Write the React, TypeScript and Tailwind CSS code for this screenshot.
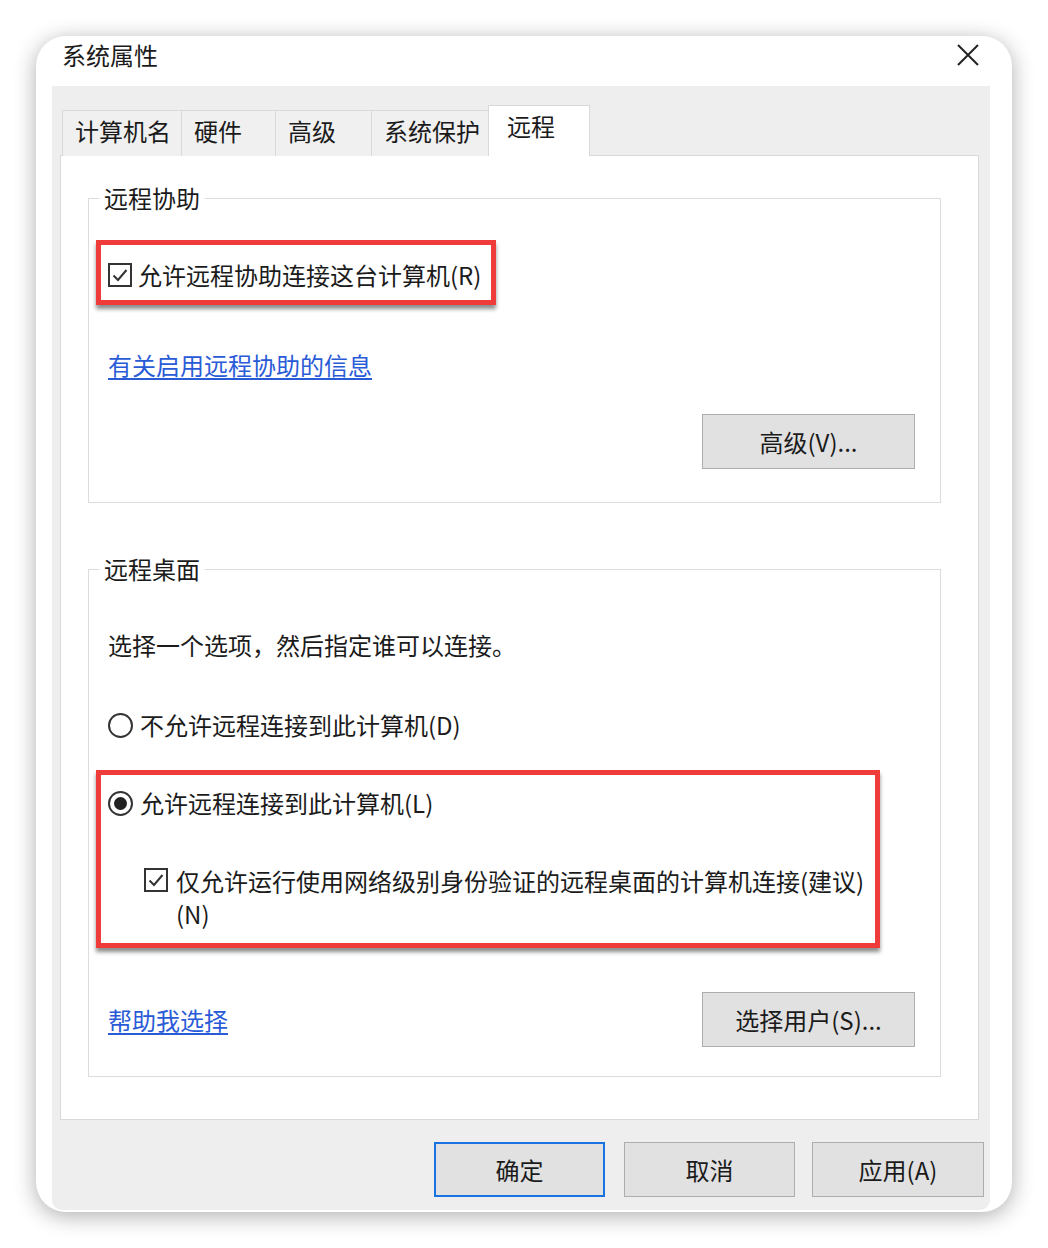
const font = "font-['Noto_Sans_CJK_SC','Noto_Sans',sans-serif]";

const Checkbox = () => (
  <span className="flex h-[24px] w-[24px] shrink-0 items-center justify-center border-2 border-[#333333] bg-white">
    <svg width="18" height="18" viewBox="0 0 18 18" fill="none">
      <path d="M2.5 9.5 L7 14 L15.5 4" stroke="#333333" strokeWidth="2" />
    </svg>
  </span>
);

const Radio = ({ checked }: { checked?: boolean }) => (
  <span className="flex h-[25px] w-[25px] shrink-0 items-center justify-center rounded-full border-2 border-[#333333] bg-white">
    {checked && <span className="h-[13px] w-[13px] rounded-full bg-[#222222]" />}
  </span>
);

const Button = ({ children, primary, className = '' }: { children: React.ReactNode; primary?: boolean; className?: string }) => (
  <button
    className={`flex h-[55px] items-center justify-center bg-[#e1e1e1] text-[24px] text-[#1b1b1b] ${
      primary ? 'border-2 border-[#1a73e0]' : 'border border-[#adadad]'
    } ${className}`}
  >
    {children}
  </button>
);

const tabs = [
  { label: '计算机名', w: 'w-[120px]' },
  { label: '硬件', w: 'w-[95px]' },
  { label: '高级', w: 'w-[97px]' },
  { label: '系统保护', w: 'w-[118px]' },
];

export default function App() {
  return (
    <div className={`h-[1248px] w-[1048px] bg-white pl-[36px] pt-[36px] ${font} text-[#1b1b1b]`}>
      <div className="flex h-[1176px] w-[976px] flex-col overflow-hidden rounded-[30px] bg-white shadow-[0_4px_22px_rgba(0,0,0,0.32)]">
        {/* title bar */}
        <div className="flex h-[50px] shrink-0 items-start justify-between pl-[26px] pr-[33px]">
          <span className="text-[24px] leading-[38px]">系统属性</span>
          <svg width="22" height="22" viewBox="0 0 22 22" className="mt-[8px]">
            <path d="M1 1 L21 21 M21 1 L1 21" stroke="#222222" strokeWidth="2" />
          </svg>
        </div>

        <div className="ml-[16px] mr-[22px] mb-[2px] flex flex-1 flex-col rounded-b-[10px] bg-[#eeeeee] pl-[8px] pr-[11px] pt-[19px]">
          {/* tabs */}
          <div className="relative z-10 -mb-px flex h-[51px] items-end pl-[2px]">
            {tabs.map((t) => (
              <div
                key={t.label}
                className={`flex h-[46px] items-center border border-b-0 border-[#d9d9d9] bg-[#f0f0f0] pb-[5px] pl-[12px] text-[24px] leading-none -ml-px first:ml-0 ${t.w}`}
              >
                {t.label}
              </div>
            ))}
            <div className="-ml-px flex h-[51px] w-[102px] items-start border border-b-0 border-[#d9d9d9] bg-white pl-[18px] pt-[8px] text-[24px] leading-none">
              远程
            </div>
          </div>

          {/* tab panel */}
          <div className="flex flex-col border border-[#d9d9d9] bg-white pb-[42px] pl-[27px] pr-[37px] pt-[26px]">
            <fieldset className="border border-[#dcdcdc] px-[7px] pb-[33px]">
              <legend className="ml-[3px] px-[5px] text-[24px] leading-[32px]">远程协助</legend>
              <div className="mt-[26px] w-fit border-[5px] border-[#f03b3b] shadow-[0_4px_4px_rgba(0,0,0,0.45)]">
                <label className="flex h-[55px] items-center gap-[6px] pl-[7px] pr-[10px] pt-[4px] text-[24px] leading-[32px]">
                  <Checkbox />
                  允许远程协助连接这台计算机(R)
                </label>
              </div>
              <a className="ml-[12px] mt-[44px] block w-fit text-[24px] leading-[32px] text-[#2a5bd7] underline underline-offset-[3px]">
                有关启用远程协助的信息
              </a>
              <div className="mt-[33px] flex justify-end pr-[18px]">
                <Button className="h-[54px] w-[213px]">高级(V)...</Button>
              </div>
            </fieldset>

            <fieldset className="mt-[50px] border border-[#dcdcdc] px-[7px] pb-[29px]">
              <legend className="ml-[3px] px-[5px] text-[24px] leading-[32px]">远程桌面</legend>
              <p className="ml-[12px] mt-[44px] text-[24px] leading-[32px]">选择一个选项，然后指定谁可以连接。</p>
              <label className="ml-[12px] mt-[48px] flex items-center gap-[7px] text-[24px] leading-[32px]">
                <Radio />
                不允许远程连接到此计算机(D)
              </label>
              <div className="mt-[29px] w-[784px] border-[5px] border-[#f03b3b] pb-[13px] pl-[7px] pt-[12px] shadow-[0_4px_4px_rgba(0,0,0,0.45)]">
                <label className="flex items-center gap-[7px] text-[24px] leading-[32px]">
                  <Radio checked />
                  允许远程连接到此计算机(L)
                </label>
                <label className="ml-[36px] mt-[45px] flex items-start gap-[8px] text-[24px] leading-[33px]">
                  <span className="mt-[4px]">
                    <Checkbox />
                  </span>
                  <span className="flex flex-col">
                    <span>仅允许运行使用网络级别身份验证的远程桌面的计算机连接(建议)</span>
                    <span>(N)</span>
                  </span>
                </label>
              </div>
              <div className="mt-[44px] flex items-center justify-between pr-[18px]">
                <a className="ml-[12px] text-[24px] leading-[32px] text-[#2a5bd7] underline underline-offset-[3px]">帮助我选择</a>
                <Button className="w-[213px]">选择用户(S)...</Button>
              </div>
            </fieldset>
          </div>

          {/* footer buttons */}
          <div className="-mr-[5px] mt-[22px] flex justify-end">
            <Button primary className="w-[171px]">确定</Button>
            <Button className="ml-[19px] w-[171px]">取消</Button>
            <Button className="ml-[17px] w-[172px]">应用(A)</Button>
          </div>
        </div>
      </div>
    </div>
  );
}
